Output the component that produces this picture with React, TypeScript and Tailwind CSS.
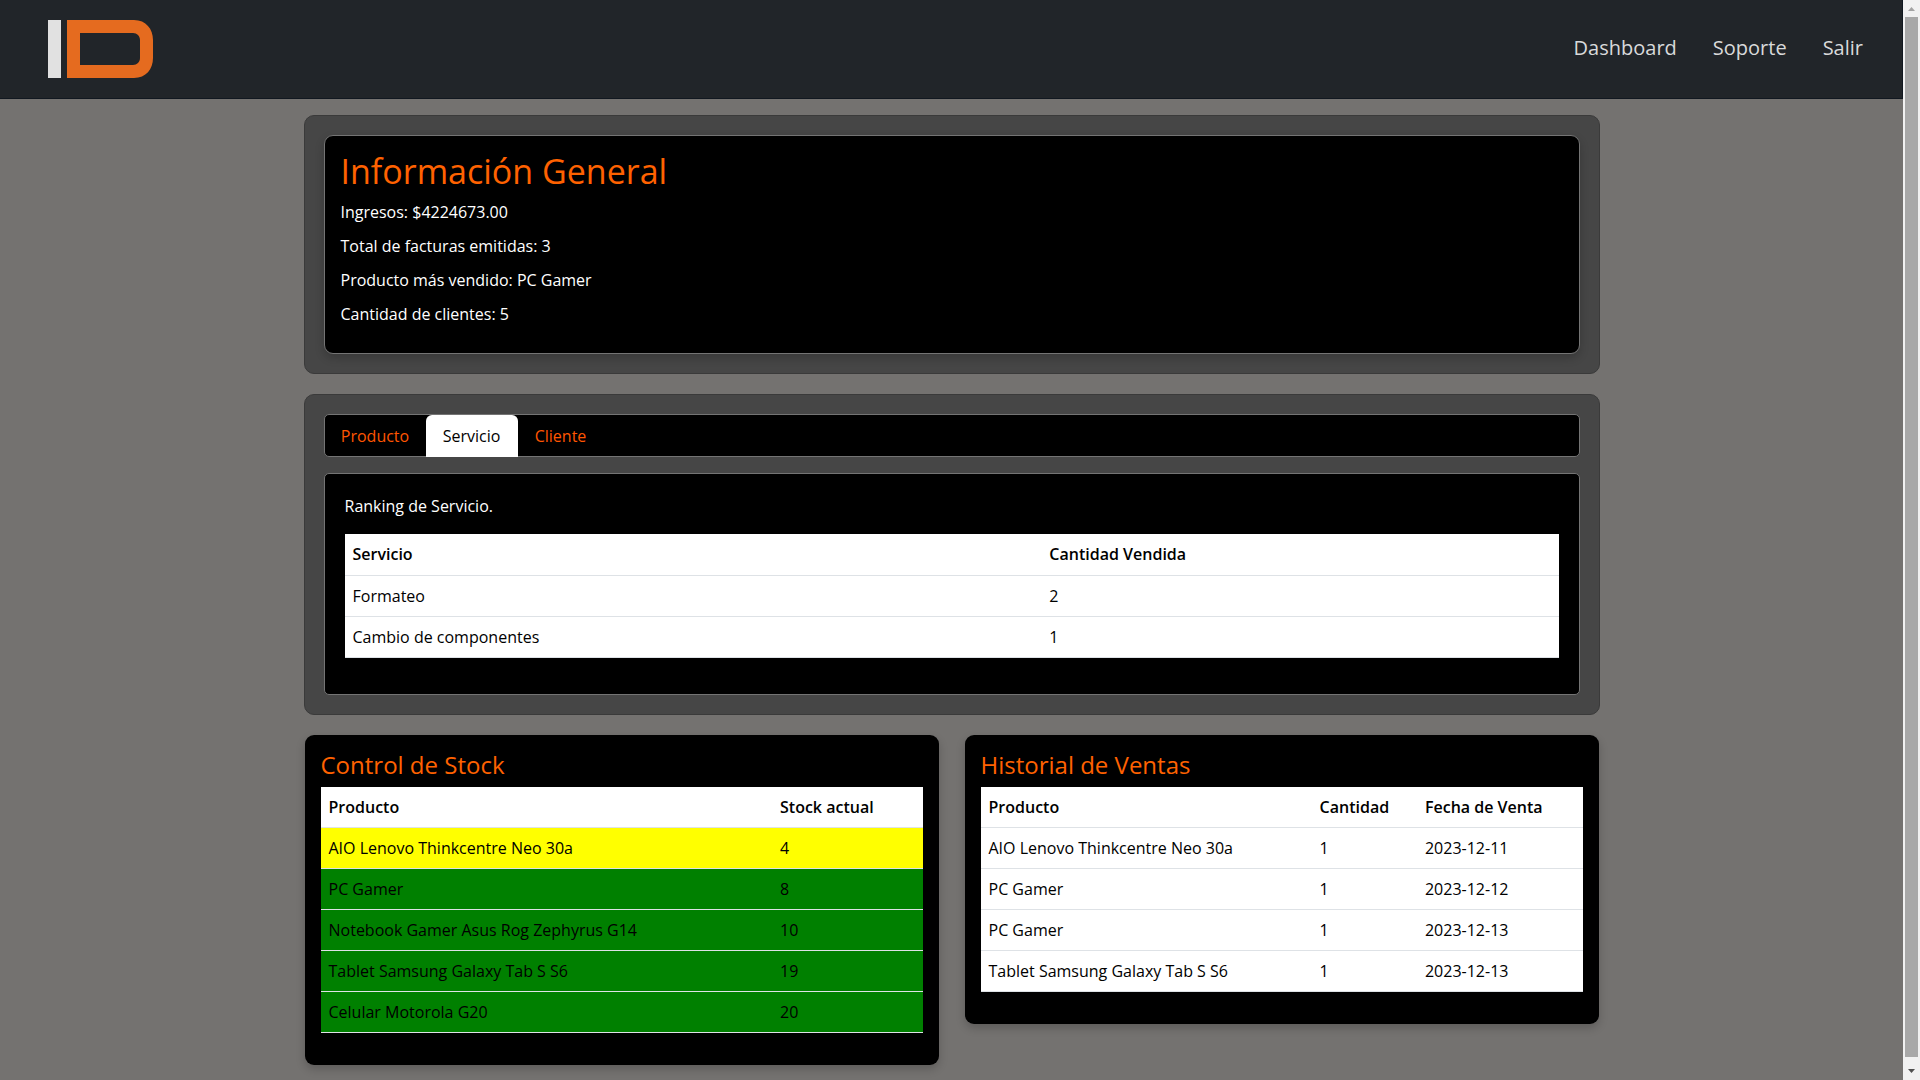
import { useState } from "react";
import type { ReactNode } from "react";

const navLinks = ["Dashboard", "Soporte", "Salir"];

const summary = [
  "Ingresos: $4224673.00",
  "Total de facturas emitidas: 3",
  "Producto más vendido: PC Gamer",
  "Cantidad de clientes: 5",
];

const tabs = [
  { name: "Producto", width: "w-[101px]" },
  { name: "Servicio", width: "w-[92px]" },
  { name: "Cliente", width: "w-[86px]" },
];

const services = [
  ["Formateo", "2"],
  ["Cambio de componentes", "1"],
];

const stock = [
  ["AIO Lenovo Thinkcentre Neo 30a", "4"],
  ["PC Gamer", "8"],
  ["Notebook Gamer Asus Rog Zephyrus G14", "10"],
  ["Tablet Samsung Galaxy Tab S S6", "19"],
  ["Celular Motorola G20", "20"],
];

const sales = [
  ["AIO Lenovo Thinkcentre Neo 30a", "1", "2023-12-11"],
  ["PC Gamer", "1", "2023-12-12"],
  ["PC Gamer", "1", "2023-12-13"],
  ["Tablet Samsung Galaxy Tab S S6", "1", "2023-12-13"],
];

function Logo() {
  return (
    <svg viewBox="0 0 106 58" className="h-[58px] w-[106px]" aria-hidden="true">
      <rect x="0" y="0" width="13" height="58" fill="#e1e1e1" />
      <path
        fill="#e56b1f"
        fillRule="evenodd"
        d="M19 0H86C98 0 105 9 105 20V38C105 49 98 58 86 58H19ZM32 13V45H85C89 45 92 42 92 38V20C92 16 89 13 85 13Z"
      />
    </svg>
  );
}

function Panel({ children }: { children: ReactNode }) {
  return (
    <section className="rounded-[10px] border border-[#3a3a3a] bg-[#464646] p-[19px]">{children}</section>
  );
}

type DataTableProps = {
  label: string;
  heads: string[];
  widths: string[];
  rows: string[][];
  rowClass?: (row: string[]) => string;
};

function DataTable({ label, heads, widths, rows, rowClass }: DataTableProps) {
  return (
    <table aria-label={label} className="w-full table-fixed border-collapse text-left text-black">
      <thead>
        <tr className="h-[41px] border-b border-[#dee2e6] bg-white">
          {heads.map((h, i) => (
            <th key={h} scope="col" className={`px-2 font-semibold ${widths[i]}`}>
              {h}
            </th>
          ))}
        </tr>
      </thead>
      <tbody>
        {rows.map((row, i) => (
          <tr key={i} className={`h-[41px] border-b border-[#dee2e6] ${rowClass ? rowClass(row) : "bg-white"}`}>
            {row.map((cell, j) => (
              <td key={j} className="px-2">
                {cell}
              </td>
            ))}
          </tr>
        ))}
      </tbody>
    </table>
  );
}

function Card({ title, children }: { title: string; children: ReactNode }) {
  return (
    <section className="rounded-[9px] bg-black px-4 pt-4 pb-8 shadow-[0_4px_10px_rgba(0,0,0,0.2)]">
      <h2 className="mb-2 text-2xl leading-7 text-[#ff6200]">{title}</h2>
      {children}
    </section>
  );
}

function ScrollRail() {
  return (
    <div aria-hidden="true" className="sticky top-0 flex h-screen w-[17px] shrink-0 flex-col items-center bg-[#f1f1f1]">
      <svg viewBox="0 0 17 17" className="h-[17px] w-[17px] shrink-0">
        <path d="M5 11h7L8.500 7z" fill="#a3a3a3" />
      </svg>
      <div className="w-[13px] flex-1 bg-[#a8a8a8]" />
      <svg viewBox="0 0 17 23" className="h-[23px] w-[17px] shrink-0">
        <path d="M5 12h7L8.500 16z" fill="#505050" />
      </svg>
    </div>
  );
}

export default function App() {
  const [active, setActive] = useState("Servicio");

  return (
    <div className="flex min-h-screen bg-[#747270] font-['Open_Sans',sans-serif] text-base leading-6">
      <div className="min-w-0 flex-1">
        <header className="flex h-[99px] items-center justify-between border-r border-b border-[#111820] bg-[#212529] pr-[39px] pl-12">
          <a href="#" aria-label="ID">
            <Logo />
          </a>
          <nav className="flex gap-9 pb-0.5 text-xl text-[#d9dadb]">
            {navLinks.map((link) => (
              <a key={link} href="#">
                {link}
              </a>
            ))}
          </nav>
        </header>

        <main className="mx-auto flex max-w-[1320px] flex-col gap-5 px-3 pt-4 pb-4">
          <Panel>
            <div className="rounded-[9px] border border-[#747474] bg-black px-4 pt-4 pb-[27px] shadow-[0_4px_10px_rgba(0,0,0,0.2)]">
              <h1 className="mb-2.5 text-[34px] leading-[38px] text-[#ff6200]">Información General</h1>
              <div className="flex flex-col gap-2.5 font-medium text-white">
                {summary.map((line) => (
                  <p key={line}>{line}</p>
                ))}
              </div>
            </div>
          </Panel>

          <Panel>
            <div role="tablist" className="mb-4 flex rounded-[5px] border border-[#747474] bg-black">
              {tabs.map((tab) => (
                <button
                  key={tab.name}
                  type="button"
                  role="tab"
                  aria-selected={tab.name === active}
                  onClick={() => setActive(tab.name)}
                  className={`${tab.width} h-[42px] -mb-px rounded-t-md text-center ${
                    tab.name === active ? "bg-white text-black" : "font-medium text-[#ff5500]"
                  }`}
                >
                  {tab.name}
                </button>
              ))}
            </div>
            <div className="rounded-[5px] border border-[#747474] bg-black px-5 pt-5 pb-9">
              <p className="mb-4 font-medium text-white">Ranking de Servicio.</p>
              <DataTable
                label="Ranking de Servicio"
                heads={["Servicio", "Cantidad Vendida"]}
                widths={["w-[57.4%]", "w-auto"]}
                rows={services}
              />
            </div>
          </Panel>

          <div className="grid grid-cols-2 items-start gap-[26px] px-px">
            <Card title="Control de Stock">
              <DataTable
                label="Control de Stock"
                heads={["Producto", "Stock actual"]}
                widths={["w-3/4", "w-auto"]}
                rows={stock}
                rowClass={(row) => (Number(row[1]) < 5 ? "bg-[#ffff00]" : "bg-[#008000]")}
              />
            </Card>
            <Card title="Historial de Ventas">
              <DataTable
                label="Historial de Ventas"
                heads={["Producto", "Cantidad", "Fecha de Venta"]}
                widths={["w-[55%]", "w-[17.5%]", "w-auto"]}
                rows={sales}
              />
            </Card>
          </div>
        </main>
      </div>
      <ScrollRail />
    </div>
  );
}
